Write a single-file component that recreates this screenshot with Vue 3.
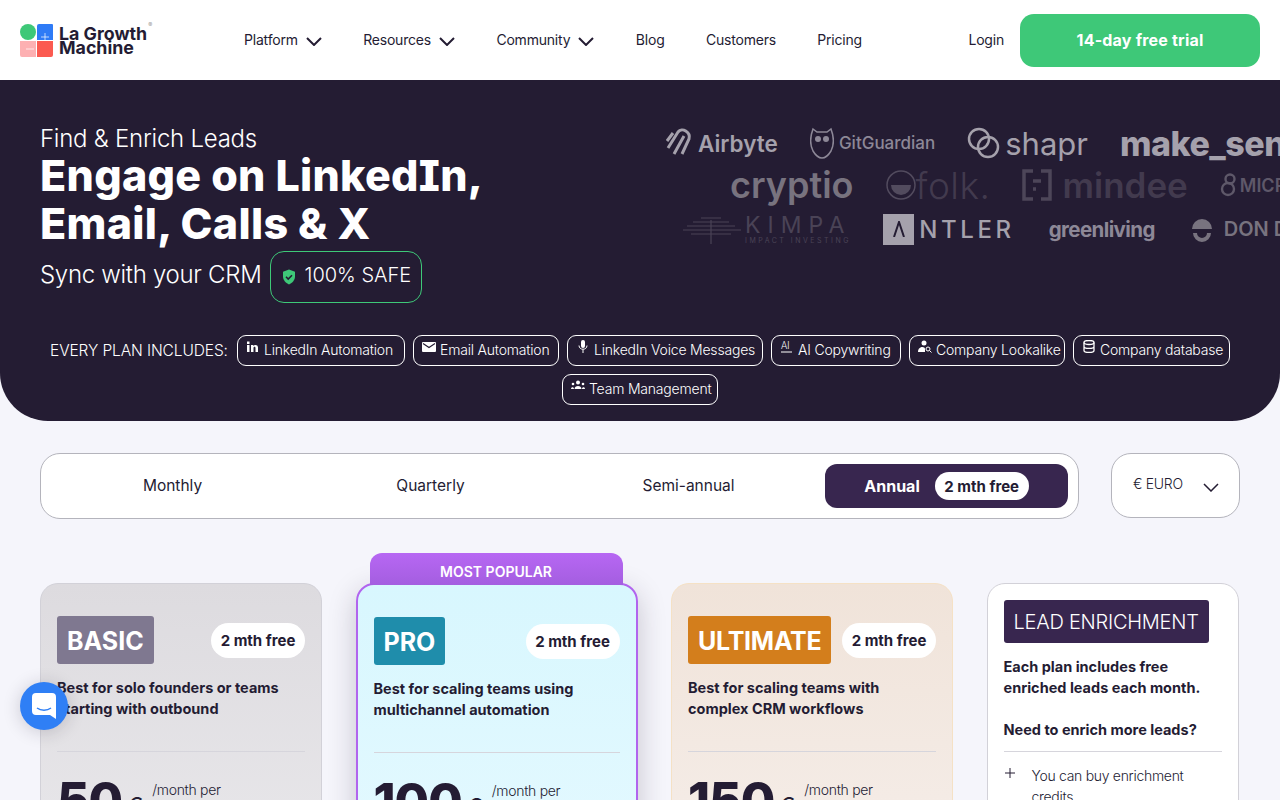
<template>
  <div class="page">
    <!-- Navigation -->
    <header class="topbar">
      <div class="brand">
        <svg class="brand-mark" width="33" height="33" viewBox="0 0 33 33">
          <circle cx="8" cy="8" r="8" fill="#3ec878" />
          <path d="M17 2a2 2 0 0 1 2-2h13a1 1 0 0 1 1 1v15H17z" fill="#2f7bf6" />
          <path d="M0 17h16v16H2a2 2 0 0 1-2-2z" fill="#fdb0b2" />
          <path d="M17 17h16v14a2 2 0 0 1-2 2H17z" fill="#fb5a50" />
          <path d="M25 9v8M21 13h8M6 25h8" stroke="#fff" stroke-width=".7" />
        </svg>
        <div class="brand-name">La Growth<br />Machine<span class="reg">®</span></div>
      </div>
      <nav class="menu">
        <a v-for="item in menu" :key="item.label" class="menu-item">
          <span>{{ item.label }}</span>
          <svg v-if="item.caret" width="16" height="9" viewBox="0 0 16 9"><path d="M1 1l7 7 7-7" fill="none" stroke="#241c33" stroke-width="2" /></svg>
        </a>
      </nav>
      <div class="actions">
        <a class="login">Login</a>
        <a class="trial">14-day free trial</a>
      </div>
    </header>

    <!-- Hero -->
    <section class="hero">
      <div class="hero-top">
        <div class="pitch">
          <p class="kicker">Find &amp; Enrich Leads</p>
          <h1>Engage on LinkedIn,<br />Email, Calls &amp; X</h1>
          <div class="sync">
            <span class="sync-text">Sync with your CRM</span>
            <span class="safe">
              <svg width="14" height="16" viewBox="0 0 14 16"><path d="M7 .5l6 2.200v4.600c0 3.800-2.500 6.700-6 8.200-3.500-1.500-6-4.400-6-8.200V2.700z" fill="#3ec878" /><path d="M4 7.800l2.200 2.200L10 6.200" fill="none" stroke="#241c33" stroke-width="1.600" /></svg>
              <span>100% SAFE</span>
            </span>
          </div>
        </div>
        <div class="logos">
          <div class="logo-row row-a">
            <span class="logo airbyte">
              <svg width="28" height="30" viewBox="0 0 28 30"><path d="M3 20L13 4c4-5 13 0 11 7l-7 15M9 26l10-18M2 13l6-8" fill="none" stroke="#a5a1ac" stroke-width="3" /></svg>
              Airbyte
            </span>
            <span class="logo guardian">
              <svg width="24" height="32" viewBox="0 0 24 32"><path d="M3 2l4 3h10l4-3c3 8 3 16 0 22-3 5-6 7-9 7s-6-2-9-7C0 18 0 10 3 2z" fill="none" stroke="#8d8897" stroke-width="1.500" /><circle cx="8" cy="12" r="3" fill="#8d8897" /><circle cx="16" cy="12" r="3" fill="#8d8897" /></svg>
              GitGuardian
            </span>
            <span class="logo shapr">
              <svg width="33" height="32" viewBox="0 0 33 32"><circle cx="12" cy="12" r="10" fill="none" stroke="#a5a1ac" stroke-width="2.500" /><circle cx="21" cy="20" r="10" fill="none" stroke="#a5a1ac" stroke-width="2.500" /></svg>
              shapr
            </span>
            <span class="logo make">make_sense</span>
          </div>
          <div class="logo-row row-b">
            <span class="logo cryptio">cryptio</span>
            <span class="logo folk">
              <svg width="30" height="32" viewBox="0 0 30 32"><circle cx="15" cy="16" r="14" fill="none" stroke="#524b5e" stroke-width="1.500" /><path d="M5 16h20a10 10 0 0 1-20 0z" fill="#524b5e" /></svg>
              folk.
            </span>
            <span class="logo mindee">
              <svg width="30" height="32" viewBox="0 0 30 32"><path d="M11 2H2v28h9M19 2h9v28h-9M11 12h8M11 20h3" fill="none" stroke="#4d4659" stroke-width="3.500" /></svg>
              mindee
            </span>
            <span class="logo micro">
              <svg width="20" height="24" viewBox="0 0 20 24"><circle cx="10" cy="6" r="4.500" fill="none" stroke="#5e5869" stroke-width="2.400" /><circle cx="8" cy="16" r="6" fill="none" stroke="#5e5869" stroke-width="2.400" /></svg>
              MICROSOFT
            </span>
          </div>
          <div class="logo-row row-c">
            <span class="logo kimpa">
              <svg width="58" height="30" viewBox="0 0 58 30"><path d="M18 4h20M10 8h36M4 12h48M0 16h58M8 20h40M28 6v24" fill="none" stroke="#4a4356" stroke-width="1.200" /></svg>
              <span class="kimpa-text">KIMPA<small>IMPACT INVESTING</small></span>
            </span>
            <span class="logo antler"><i><svg width="12" height="16" viewBox="0 0 12 16"><path d="M1 16L6 1l5 15" fill="none" stroke="#241c33" stroke-width="2" /></svg></i>NTLER</span>
            <span class="logo green">greenliving</span>
            <span class="logo don">
              <svg width="22" height="30" viewBox="0 0 22 30"><path d="M1 15a10 10 0 0 1 20 0z" fill="#78737f" /><path d="M2 19a9 9 0 0 0 18 0h-4a5 5 0 0 1-10 0z" fill="#78737f" /></svg>
              DON DE GOURMET
            </span>
          </div>
        </div>
      </div>

      <div class="includes">
        <span class="includes-label">EVERY PLAN INCLUDES:</span>
        <span v-for="f in features" :key="f.label" class="pill" :style="{ width: f.width + 'px' }">
          <svg class="pill-icon" width="14" height="14" viewBox="0 0 14 14" v-html="f.icon"></svg>
          {{ f.label }}
        </span>
      </div>
    </section>

    <!-- Billing period -->
    <section class="billing">
      <div class="periods">
        <div v-for="p in periods" :key="p" class="period">{{ p }}</div>
        <div class="period active">Annual <span class="free">2 mth free</span></div>
      </div>
      <div class="currency">
        <span class="currency-name">€ EURO</span>
        <svg width="16" height="9" viewBox="0 0 16 9"><path d="M1 1l7 7 7-7" fill="none" stroke="#241c33" stroke-width="1.500" /></svg>
      </div>
    </section>

    <!-- Plans -->
    <section class="plans">
      <article v-for="plan in plans" :key="plan.name" class="plan" :class="plan.key">
        <div v-if="plan.key === 'pro'" class="popular">MOST POPULAR</div>
        <div class="plan-head">
          <span class="plan-name">{{ plan.name }}</span>
          <span class="free">2 mth free</span>
        </div>
        <p class="plan-desc">{{ plan.desc }}</p>
        <hr />
        <div class="price">
          <span class="amount">{{ plan.price }}</span>
          <span class="euro">€</span>
          <span class="per">/month per<br />user</span>
        </div>
      </article>
      <article class="plan enrich">
        <span class="enrich-name">LEAD ENRICHMENT</span>
        <p class="plan-desc">Each plan includes free<br />enriched leads each month.<br /><br />Need to enrich more leads?</p>
        <hr />
        <div class="enrich-row">
          <svg width="12" height="12" viewBox="0 0 12 12"><path d="M6 1v10M1 6h10" stroke="#241c33" stroke-width="1" /></svg>
          <span>You can buy enrichment credits</span>
        </div>
      </article>
    </section>

    <!-- Chat launcher -->
    <div class="chat">
      <svg width="24" height="26" viewBox="0 0 24 26"><path d="M4 0h16a4 4 0 0 1 4 4v22l-6-4H4a4 4 0 0 1-4-4V4a4 4 0 0 1 4-4z" fill="#fff" /><path d="M5 15c4 3 10 3 14 0" fill="none" stroke="#2f7ff5" stroke-width="1.500" /></svg>
    </div>
  </div>
</template>

<script setup>
const menu = [
  { label: 'Platform', caret: true },
  { label: 'Resources', caret: true },
  { label: 'Community', caret: true },
  { label: 'Blog' },
  { label: 'Customers' },
  { label: 'Pricing' },
]

const features = [
  { label: 'LinkedIn Automation', width: 168, icon: '<path d="M1 5h2.500v7H1zM1 1.500h2.500V4H1zM5 5h2.400v1c1-1.600 4.600-1.700 4.600 1.600V12H9.500V8c0-1.800-2-1.600-2 0v4H5z" fill="#fff"/>' },
  { label: 'Email Automation', width: 146, icon: '<path d="M1 2h12a1 1 0 0 1 1 1v8a1 1 0 0 1-1 1H1a1 1 0 0 1-1-1V3a1 1 0 0 1 1-1z" fill="#fff"/><path d="M1 3.500l6 4 6-4" fill="none" stroke="#241c33" stroke-width="1.200"/>' },
  { label: 'LinkedIn Voice Messages', width: 196, icon: '<rect x="5" y="0" width="4" height="8" rx="2" fill="#fff"/><path d="M3 5.500c0 5 8 5 8 0M7 9.500V13" fill="none" stroke="#fff"/>' },
  { label: 'AI Copywriting', width: 130, icon: '<text x="1" y="9" font-size="10" fill="#fff" font-family="Roboto, sans-serif">AI</text><path d="M1 12h11" stroke="#fff"/>' },
  { label: 'Company Lookalike', width: 156, icon: '<circle cx="6" cy="3" r="2.500" fill="#fff"/><path d="M0 12c0-6 7-6 7-3v3z" fill="#fff"/><circle cx="10" cy="9" r="2" fill="none" stroke="#fff"/><path d="M11.500 10.500L13.500 12.500" stroke="#fff"/>' },
  { label: 'Company database', width: 157, icon: '<ellipse cx="7" cy="2.500" rx="5" ry="2" fill="none" stroke="#fff" stroke-width="1.300"/><path d="M2 2.500v8c0 2.600 10 2.600 10 0v-8M2 6.500c0 2.600 10 2.600 10 0" fill="none" stroke="#fff" stroke-width="1.300"/>' },
  { label: 'Team Management', width: 156, icon: '<circle cx="7" cy="3.500" r="2" fill="#fff"/><path d="M3.500 10c0-4 7-4 7 0z" fill="#fff"/><circle cx="2" cy="5" r="1.300" fill="#fff"/><circle cx="12" cy="5" r="1.300" fill="#fff"/><path d="M0 10c0-2.500 3-2.500 3 0zM11 10c0-2.500 3-2.500 3 0z" fill="#fff"/>' },
]

const periods = ['Monthly', 'Quarterly', 'Semi-annual']

const plans = [
  { key: 'basic', name: 'BASIC', price: '50', desc: 'Best for solo founders or teams starting with outbound' },
  { key: 'pro', name: 'PRO', price: '100', desc: 'Best for scaling teams using multichannel automation' },
  { key: 'ultimate', name: 'ULTIMATE', price: '150', desc: 'Best for scaling teams with complex CRM workflows' },
]
</script>

<style>
html, body {
  margin: 0;
  height: 800px;
  overflow: hidden;
  background: #f5f5fb;
}
</style>

<style scoped>
.page {
  position: relative;
  height: 800px;
  overflow: hidden;
  font-family: Inter, "Liberation Sans", sans-serif;
  color: #241c33;
  background: #f5f5fb;
}

.topbar {
  display: flex;
  align-items: center;
  height: 80px;
  padding: 0 20px;
  background: #fff;
}

.brand {
  display: flex;
  align-items: center;
  gap: 6px;
  width: 224px;
}

.brand-mark {
  flex: none;
}

.brand-name {
  position: relative;
  padding-top: 2px;
  font-size: 17.800px;
  font-weight: 700;
  line-height: 14px;
}

.reg {
  position: absolute;
  top: -7px;
  right: -5px;
  font-size: 6px;
  font-weight: 400;
  color: #999;
}

.menu {
  display: flex;
  align-items: center;
  gap: 41.400px;
}

.menu-item {
  display: flex;
  align-items: center;
  gap: 8px;
  font-size: 14px;
  letter-spacing: -0.2px;
  white-space: nowrap;
}

.menu-item span {
  padding-bottom: 2px;
}

.menu-item svg {
  margin-top: 3px;
}

.actions {
  display: flex;
  align-items: center;
  gap: 16px;
  margin-left: auto;
}

.login {
  padding-bottom: 2px;
  font-size: 14px;
  letter-spacing: -0.2px;
}

.trial {
  display: flex;
  align-items: center;
  justify-content: center;
  width: 240px;
  height: 53px;
  border-radius: 14px;
  background: #3ec878;
  color: #fff;
  font-size: 16px;
  font-weight: 700;
  letter-spacing: 0.2px;
}

.hero {
  height: 341px;
  box-sizing: border-box;
  padding: 45px 40px 0;
  background: #241c33;
  border-radius: 0 0 48px 48px;
  color: #fff;
  overflow: hidden;
}

.hero-top {
  display: flex;
  height: 178px;
}

.pitch {
  width: 625px;
  flex: none;
}

.kicker {
  margin: 0;
  font-size: 24px;
  font-weight: 300;
  line-height: 28px;
  letter-spacing: -0.25px;
}

h1 {
  margin: -2px 0 0;
  font-size: 43px;
  font-weight: 800;
  line-height: 48px;
  letter-spacing: 0.3px;
  font-feature-settings: "cv08";
}

.sync {
  display: flex;
  align-items: center;
  gap: 8px;
  margin-top: 4px;
  font-size: 24px;
  font-weight: 300;
  letter-spacing: -0.3px;
}

.sync-text {
  padding-bottom: 5px;
}

.safe {
  display: flex;
  align-items: center;
  gap: 9px;
  height: 52px;
  box-sizing: border-box;
  padding: 0 10px 0 11px;
  border: 1px solid #3ec878;
  border-radius: 14px;
  font-size: 20px;
  letter-spacing: 0;
}

.safe span {
  padding-bottom: 4px;
}

.logos {
  display: flex;
  flex-direction: column;
  margin-top: -3px;
  margin-right: -40px;
  overflow: hidden;
  white-space: nowrap;
}

.logo-row {
  display: flex;
  align-items: center;
  height: 42px;
}

.row-a {
  gap: 32px;
}

.row-b {
  gap: 32px;
  margin-left: 65px;
}

.row-c {
  gap: 32px;
  margin-top: 1px;
  margin-left: 18px;
  height: 44px;
}

.logo {
  display: inline-flex;
  align-items: center;
  gap: 5px;
  flex: none;
}

.airbyte {
  font-size: 22.500px;
  font-weight: 600;
  color: #a5a1ac;
}

.guardian {
  font-size: 17px;
  font-weight: 500;
  color: #8d8897;
}

.shapr {
  font-size: 31px;
  font-weight: 400;
  color: #a5a1ac;
}

.make {
  font-size: 34px;
  font-weight: 800;
  letter-spacing: -0.5px;
  color: #a5a1ac;
}

.cryptio {
  font-size: 36px;
  font-weight: 600;
  color: #78737f;
}

.folk {
  gap: 0;
  font-size: 37px;
  font-weight: 300;
  letter-spacing: 0.5px;
  color: #423a4e;
}

.mindee {
  gap: 10px;
  font-size: 35px;
  font-weight: 600;
  color: #423a4e;
}

.micro {
  gap: 0;
  font-size: 18px;
  font-weight: 600;
  color: #5e5869;
}

.kimpa {
  gap: 4px;
  color: #4a4356;
}

.kimpa-text {
  display: flex;
  flex-direction: column;
  font-size: 23px;
  line-height: 24px;
  letter-spacing: 7px;
}

.kimpa-text small {
  font-size: 7px;
  line-height: 8px;
  letter-spacing: 2.500px;
}

.antler {
  gap: 5px;
  font-size: 24px;
  font-weight: 500;
  letter-spacing: 3.600px;
  color: #a5a1ac;
}

.antler i {
  display: flex;
  align-items: center;
  justify-content: center;
  width: 31px;
  height: 31px;
  background: #a5a1ac;
}

.green {
  margin-left: 2px;
  font-size: 20.500px;
  font-weight: 700;
  letter-spacing: -0.6px;
  color: #8d8897;
}

.don {
  gap: 11px;
  margin-left: 4px;
  font-size: 20px;
  font-weight: 600;
  color: #78737f;
}

.includes {
  display: flex;
  flex-wrap: wrap;
  justify-content: center;
  align-items: center;
  gap: 8px;
  margin-top: 32px;
}

.includes-label {
  width: 179px;
  font-size: 15.500px;
  font-weight: 300;
  letter-spacing: -0.1px;
  white-space: nowrap;
}

.pill {
  display: flex;
  align-items: center;
  gap: 4px;
  height: 31px;
  box-sizing: border-box;
  padding: 0 0 3px 8px;
  border: 1px solid #fff;
  border-radius: 9px;
  font-size: 14px;
  font-weight: 300;
  letter-spacing: -0.2px;
  white-space: nowrap;
}

.pill-icon {
  flex: none;
  margin-top: -4px;
}

.billing {
  display: flex;
  justify-content: space-between;
  align-items: flex-start;
  padding: 32px 40px 0;
}

.periods {
  display: grid;
  grid-template-columns: repeat(4, 243px);
  gap: 15px;
  box-sizing: border-box;
  width: 1039px;
  height: 66px;
  padding: 10px;
  border: 1px solid #b4b4bc;
  border-radius: 20px;
  background: #fff;
}

.period {
  display: flex;
  align-items: center;
  justify-content: center;
  gap: 15px;
  padding-bottom: 2px;
  border-radius: 12px;
  font-size: 15.500px;
  font-weight: 400;
}

.period.active {
  padding-bottom: 0;
  background: #38264f;
  color: #fff;
  font-size: 16px;
  font-weight: 700;
}

.free {
  display: inline-flex;
  align-items: center;
  justify-content: center;
  border-radius: 18px;
  background: #fff;
  color: #241c33;
  font-size: 15px;
  font-weight: 700;
  white-space: nowrap;
}

.period .free {
  width: 94px;
  height: 28px;
}

.currency {
  display: flex;
  align-items: center;
  justify-content: space-between;
  box-sizing: border-box;
  width: 129px;
  height: 65px;
  padding: 0 20px 0 21px;
  border: 1px solid #b4b4bc;
  border-radius: 20px;
  background: #fff;
  font-size: 14px;
  font-weight: 300;
  letter-spacing: -0.3px;
}

.currency-name {
  padding-bottom: 4px;
}

.currency svg {
  margin-top: 4px;
}

.plans {
  display: grid;
  grid-template-columns: 282px 282px 282px 252px;
  column-gap: 33.500px;
  padding: 64px 40px 0;
}

.plan {
  position: relative;
  height: 320px;
  box-sizing: border-box;
  padding: 32px 16px 0;
  border: 1px solid #d2d1d8;
  border-radius: 18px;
}

.basic {
  background: linear-gradient(#dddbdf, #eae9ec);
}

.pro {
  padding: 32px 16px 0;
  border: 2px solid #b164ee;
  background: linear-gradient(#d8f7fe, #e5f9ff);
  box-shadow: 0 8px 28px rgba(36, 28, 51, 0.22);
}

.ultimate {
  border-color: #f5e1c5;
  background: linear-gradient(#f0e3d9, #f6efeb);
}

.enrich {
  padding: 16px 16px 0;
  background: #fff;
}

.popular {
  position: absolute;
  top: -32px;
  left: 12px;
  width: 253px;
  height: 32px;
  padding-top: 4px;
  box-sizing: border-box;
  border-radius: 12px 12px 0 0;
  background: linear-gradient(#b767f3, #a45ee0);
  color: #fff;
  font-size: 14px;
  font-weight: 600;
  line-height: 30px;
  text-align: center;
}

.plan-head {
  display: flex;
  align-items: center;
  justify-content: space-between;
}

.plan-name {
  display: flex;
  align-items: center;
  height: 48px;
  box-sizing: border-box;
  padding: 2px 10px 0;
  border-radius: 3px;
  color: #fff;
  font-size: 25px;
  font-weight: 700;
}

.basic .plan-name {
  background: #7f7890;
}

.pro .plan-name {
  background: #1f8dab;
}

.ultimate .plan-name {
  background: #d37e1c;
  letter-spacing: -0.25px;
}

.plan-head .free {
  width: 94px;
  height: 35px;
}

.plan-desc {
  margin: 13px 0 0;
  height: 63px;
  font-size: 14.500px;
  font-weight: 700;
  line-height: 21px;
}

hr {
  margin: 11px 0 0;
  border: none;
  border-top: 1px solid #d6d5dc;
}

.price {
  display: flex;
  align-items: flex-start;
  margin-top: 20px;
}

.amount {
  font-size: 50px;
  font-weight: 800;
  line-height: 56px;
  letter-spacing: -1px;
}

.euro {
  margin: 20px 9px 0 5px;
  font-size: 24px;
  font-weight: 400;
}

.per {
  margin-top: 7px;
  font-size: 14px;
  font-weight: 300;
  line-height: 21px;
  letter-spacing: -0.3px;
}

.enrich-name {
  display: inline-flex;
  align-items: center;
  height: 43px;
  padding: 0 10px;
  border-radius: 3px;
  background: #38264f;
  color: #fff;
  font-size: 20px;
  font-weight: 300;
  letter-spacing: -0.25px;
}

.enrich .plan-desc {
  margin-top: 13px;
  height: 84px;
}

.enrich hr {
  margin-top: 11px;
}

.enrich-row {
  display: flex;
  gap: 16px;
  margin-top: 13px;
  font-size: 14px;
  font-weight: 300;
  line-height: 21px;
  letter-spacing: -0.3px;
}

.enrich-row svg {
  flex: none;
  margin-top: 2px;
}

.chat {
  position: absolute;
  left: 20px;
  top: 682px;
  display: flex;
  align-items: center;
  justify-content: center;
  width: 48px;
  height: 48px;
  border-radius: 50%;
  background: #2f7ff5;
  box-shadow: 0 2px 18px rgba(36, 28, 51, 0.2);
}
</style>
